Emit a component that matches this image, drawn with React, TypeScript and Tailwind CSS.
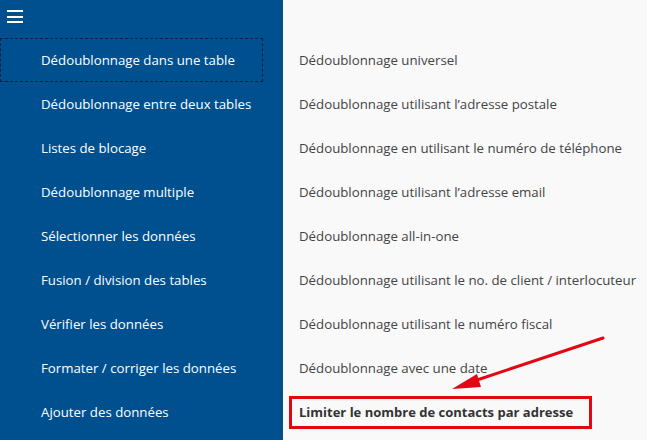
const leftItems = [
  'Dédoublonnage dans une table',
  'Dédoublonnage entre deux tables',
  'Listes de blocage',
  'Dédoublonnage multiple',
  'Sélectionner les données',
  'Fusion / division des tables',
  'Vérifier les données',
  'Formater / corriger les données',
  'Ajouter des données',
];

const rightItems = [
  'Dédoublonnage universel',
  'Dédoublonnage utilisant l’adresse postale',
  'Dédoublonnage en utilisant le numéro de téléphone',
  'Dédoublonnage utilisant l’adresse email',
  'Dédoublonnage all-in-one',
  'Dédoublonnage utilisant le no. de client / interlocuteur',
  'Dédoublonnage utilisant le numéro fiscal',
  'Dédoublonnage avec une date',
];

const App = () => {
  return (
    <div className="relative flex h-[440px] w-[647px] overflow-hidden font-['Open_Sans',sans-serif] text-[13.25px]">
      <aside className="flex w-[283px] shrink-0 flex-col bg-[#00508f] text-white">
        <div className="h-[38px] pl-[7px] pt-[10px]">
          <div className="flex w-[16px] flex-col gap-[3.5px]">
            <span className="h-[2px] bg-white" />
            <span className="h-[2px] bg-white" />
            <span className="h-[2px] bg-white" />
          </div>
        </div>
        <nav className="flex flex-col">
          {leftItems.map((item, i) => (
            <div
              key={item}
              className={
                i === 0
                  ? 'flex h-[44px] w-[263px] items-center border border-dashed border-[#0a2440] pl-[40px] pt-[2px]'
                  : 'flex h-[44px] items-center pl-[41px] pt-[2px]'
              }
            >
              {item}
            </div>
          ))}
        </nav>
      </aside>

      <main className="flex flex-1 flex-col bg-[#f9f9f9] pt-[38px] text-[#444]">
        {rightItems.map((item) => (
          <div key={item} className="flex h-[44px] items-center whitespace-nowrap pl-[16px] pt-[2px]">
            {item}
          </div>
        ))}
        <div className="flex h-[44px] items-center pl-[6px]">
          <div className="flex h-[33px] w-[303px] items-center border-[3px] border-[#e30613] pl-[7px] pt-[1px] text-[13px] font-bold text-[#333]">
            Limiter le nombre de contacts par adresse
          </div>
        </div>
      </main>

      {/* annotation arrow */}
      <svg className="pointer-events-none absolute left-0 top-0" width="647" height="440">
        <line x1="603" y1="338" x2="474" y2="381" stroke="#e30613" strokeWidth="3" strokeLinecap="round" />
        <polygon points="452,389 477,374 481,387" fill="#e30613" />
      </svg>
    </div>
  );
};

export default App;
